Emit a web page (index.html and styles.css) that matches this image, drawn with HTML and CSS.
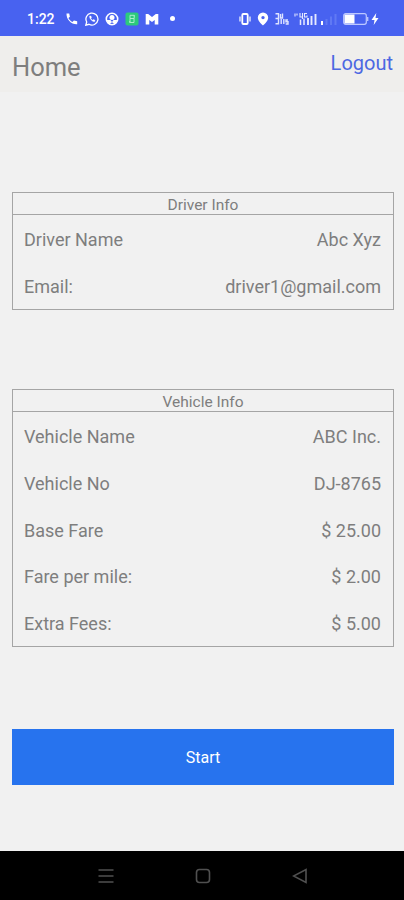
FILE: index.html
```html
<!DOCTYPE html>
<html lang="en">
<head>
  <meta charset="UTF-8">
  <meta name="viewport" content="width=device-width, initial-scale=1">
  <title>Home</title>
  <link rel="stylesheet" href="styles.css">
</head>
<body>

<div class="status-bar">
  <div class="status-left">
    <span class="clock">1:22</span>
    <svg width="14" height="14" viewBox="0 0 14 14"><path d="M1.500 1.500h2.700l.7 3.200-1.500 1.400c.9 1.700 2.300 3 4 3.900l1.500-1.400 3.300.7v3C6.500 12.700 1.200 7.500 1.500 1.500z" fill="#fff"/></svg>
    <svg width="14" height="14" viewBox="0 0 14 14" fill="none" stroke="#fff"><path d="M.8 13.200l.9-3.200a6 6 0 1 1 2.300 2.300z" stroke-width="1.300"/><path d="M4.700 4c-.7 2.300 2.600 6 5 5.500l.3-1.200-1.500-.8-.8.7C6.700 7.700 6.100 7 5.800 6.200l.7-.8-.6-1.400z" fill="#fff" stroke-width=".4"/></svg>
    <svg width="14" height="14" viewBox="0 0 14 14"><circle cx="7" cy="7" r="5.700" fill="none" stroke="#fff" stroke-width="1.600"/><circle cx="7" cy="5.500" r="2.500" fill="#fff"/><path d="M1.500 8h4l1.500 2 1.500-2h4l-2 4H9.500L7 10.300 4.500 12h-1z" fill="#fff"/></svg>
    <svg width="14" height="14" viewBox="0 0 14 14"><rect x=".5" y=".5" width="13" height="13" rx="2" fill="#2dca7c"/><path d="M9.300 4.500V3.300H5v3.200h4v4H4.700V9M5 6.500v4M9.200 3.500v3" fill="none" stroke="#a9edcb"/></svg>
    <svg width="14" height="14" viewBox="0 0 14 14"><path d="M.7 2h2.500L7 5l3.800-3h2.500v10.500H9.700V8L7 10 4.300 8v4.500H.7z" fill="#fff"/></svg>
    <span class="dot"></span>
  </div>
  <div class="status-right">
    <svg width="14" height="14" viewBox="0 0 14 14" fill="none" stroke="#fff"><rect x="4.300" y="2" width="5.400" height="10" rx="1" stroke-width="1.800"/><path d="M2 4.500v5M12 4.500v5" stroke-width="1.200"/></svg>
    <svg class="pin" width="12" height="14" viewBox="0 0 12 14"><path d="M6 .5a5.200 5.200 0 0 1 5.200 5.200C11.200 9.300 6 13.500 6 13.500S.8 9.300.8 5.700A5.200 5.200 0 0 1 6 .5zm0 3.400a1.700 1.700 0 1 0 0 3.400 1.700 1.700 0 0 0 0-3.400z" fill="#fff"/></svg>
    <svg class="rate" width="14" height="14" viewBox="0 0 14 14" fill="none" stroke="#dfe4ff" stroke-width="1.400"><path d="M.5 1.800h3v10h-3M.5 6.500h3M5.500 2v4h2V1.500M6.200 7v5M8.800 7v5M13 8h-2v1.800h2V12h-2.300"/></svg>
    <svg class="network" width="24" height="14" viewBox="0 0 24 14" fill="none" stroke="#e6eaff"><path d="M1 1.500v3M3 1.500v2M6 1v4h2M8.500 1v6M13 1.500h-2.500V5H13V3.500" stroke-width="1.100"/><path d="M6.500 7.500V13M10 6.500V13" stroke-width="1.500"/><path d="M14 6v7M17.500 4v9M21.500 2v11" stroke-width="1.900"/></svg>
    <svg class="signal" width="18" height="14" viewBox="0 0 18 14"><path d="M1 9h2v4H1z" fill="#fff"/><path d="M5.500 7h2v6h-2zM10 4.500h2V13h-2zM14.500 2h2v11h-2z" fill="#6079f4"/></svg>
    <svg class="battery" width="26" height="14" viewBox="0 0 26 14"><rect x=".7" y="1.700" width="22.600" height="10.600" rx="2" fill="none" stroke="#bdc8ff" stroke-width="1.200"/><rect x="1.500" y="2.500" width="10" height="9" fill="#fff"/><path d="M24.700 5v4" stroke="#bdc8ff" stroke-width="1.300"/></svg>
    <svg class="bolt" width="8" height="14" viewBox="0 0 8 14"><path d="M5.300 1L.5 8h3l-.8 5L7.500 6h-3z" fill="#fff"/></svg>
  </div>
</div>

<div class="header">
  <h1>Home</h1>
  <a href="#" class="logout">Logout</a>
</div>

<div class="content">
  <div class="card">
    <h2>Driver Info</h2>
    <div class="row"><span>Driver Name</span><span>Abc Xyz</span></div>
    <div class="row"><span>Email:</span><span>driver1@gmail.com</span></div>
  </div>

  <div class="card">
    <h2>Vehicle Info</h2>
    <div class="row"><span>Vehicle Name</span><span>ABC Inc.</span></div>
    <div class="row"><span>Vehicle No</span><span>DJ-8765</span></div>
    <div class="row"><span>Base Fare</span><span>$ 25.00</span></div>
    <div class="row"><span>Fare per mile:</span><span>$ 2.00</span></div>
    <div class="row"><span>Extra Fees:</span><span>$ 5.00</span></div>
  </div>

  <button class="start">Start</button>
</div>

<div class="nav-bar">
  <svg width="16" height="16" viewBox="0 0 16 16"><path d="M.5 2h15M.5 8h15M.5 14h15"/></svg>
  <svg width="16" height="16" viewBox="0 0 16 16"><rect x="1.500" y="1.500" width="13" height="13" rx="3"/></svg>
  <svg width="16" height="16" viewBox="0 0 16 16"><path d="M14 1.500v13L1.500 8z"/></svg>
</div>

</body>
</html>
```
FILE: styles.css
```css
* {
  box-sizing: border-box;
}
body {
  margin: 0;
  height: 900px;
  display: flex;
  flex-direction: column;
  font-family: Roboto, sans-serif;
  background-color: #f1f1f1;
  color: #7e7e7e;
}
svg {
  display: block;
  flex: none;
}
.status-bar {
  height: 36px;
  display: flex;
  justify-content: space-between;
  align-items: center;
  padding: 1px 25px 0 27px;
  background-color: #4862f0;
}
.status-left, .status-right {
  display: flex;
  align-items: center;
}
.status-left {
  gap: 6px;
}
.clock {
  width: 32px;
  font-size: 14px;
  font-weight: 500;
  color: #fff;
}
.dot {
  width: 5px;
  height: 5px;
  margin-left: 5px;
  border-radius: 50%;
  background-color: #fff;
}
.pin {
  margin-left: 5px;
}
.rate {
  margin-left: 6px;
}
.network {
  margin-left: 5px;
}
.signal {
  margin-left: 2px;
}
.battery {
  margin-left: 5px;
}
.bolt {
  margin-left: 2px;
}
.header {
  height: 56px;
  display: flex;
  justify-content: space-between;
  padding: 0 11px 0 12px;
  background-color: #efeeec;
}
h1 {
  margin: 0;
  font-size: 25.500px;
  font-weight: 400;
  line-height: 62px;
}
.logout {
  font-size: 20px;
  line-height: 54px;
  color: #4c68e2;
  text-decoration: none;
}
.content {
  flex: 1;
  display: flex;
  flex-direction: column;
  gap: 79px;
  padding: 100px 10px 0 12px;
}
.card {
  border: 1px solid #a5a5a5;
  padding-bottom: 1px;
}
h2 {
  margin: 0;
  height: 22px;
  border-bottom: 1px solid #a5a5a5;
  font-size: 15.500px;
  font-weight: 400;
  line-height: 24px;
  text-align: center;
}
.row {
  height: 46.600px;
  display: flex;
  justify-content: space-between;
  align-items: center;
  padding: 3px 12px 0 11px;
  font-size: 18px;
}
.start {
  height: 56px;
  margin-top: 3px;
  border: none;
  background-color: #2773ee;
  color: #fff;
  font-family: inherit;
  font-size: 16px;
}
.nav-bar {
  height: 49px;
  display: flex;
  justify-content: center;
  align-items: center;
  gap: 81px;
  padding-left: 2px;
  background-color: #000;
}
.nav-bar svg {
  fill: none;
  stroke: #505050;
  stroke-width: 1.600;
}
```
